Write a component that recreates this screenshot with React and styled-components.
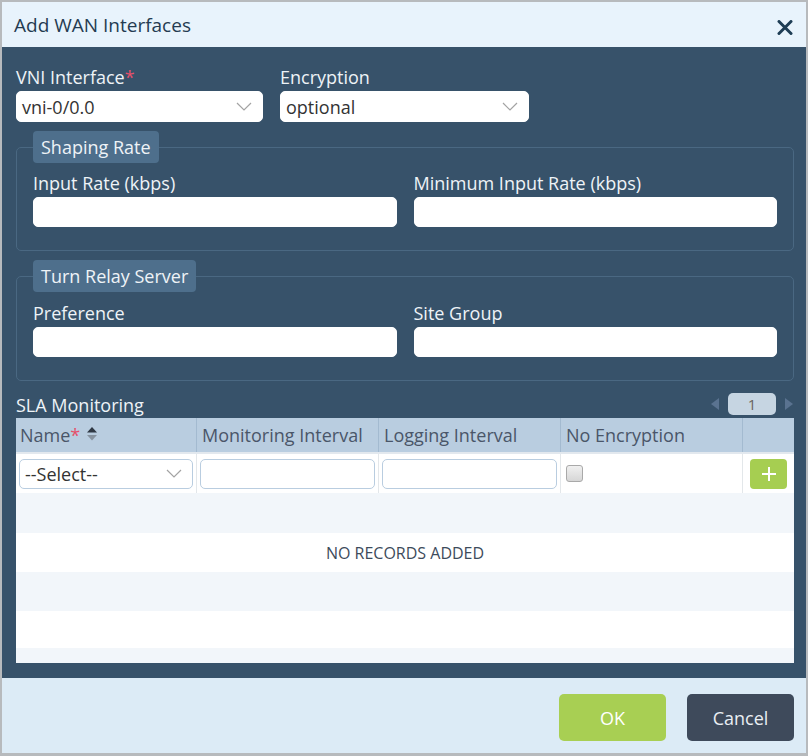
import React from 'react';
import styled, {createGlobalStyle} from 'styled-components';

const GlobalStyle = createGlobalStyle`
body {
    margin: 0;
    background: #fff;
    font-family: "Open Sans", "Liberation Sans", sans-serif;
}
* {
    box-sizing: border-box;
}
`;

const Dialog = styled.div`
width: 808px;
height: 756px;
border: 2px solid #b7babd;
border-bottom-width: 3px;
display: flex;
flex-direction: column;
background: #37526a;
`;

const Header = styled.div`
height: 45px;
flex: none;
background: #e8f3fc;
display: flex;
align-items: center;
justify-content: space-between;
padding: 0 12px 0 12px;
    h4 {
        margin: 0;
        font-size: 19px;
        font-weight: 400;
        color: #243b51;
        padding-top: 1px;
    }
`;

const CloseBtn = styled.button`
border: 0;
background: none;
padding: 0;
width: 18px;
height: 18px;
display: flex;
align-items: center;
justify-content: center;
margin-top: 5px;
cursor: pointer;
`;

const Body = styled.div`
flex: 1;
display: flex;
flex-direction: column;
padding: 18px 12px 15px 14px;
`;

const TopRow = styled.div`
display: grid;
grid-template-columns: 247px 249px;
column-gap: 17px;
`;

const Field = styled.div`
display: flex;
flex-direction: column;
`;

const Label = styled.label`
font-size: 18px;
line-height: 24px;
color: #eef3f7;
margin-bottom: 2px;
white-space: nowrap;
`;

const Req = styled.span`
color: #e5506a;
`;

const SelectBox = styled.div`
height: ${p => p.h || 31}px;
background: #fff;
border: 1px solid ${p => p.bordered ? '#b9cde0' : '#fff'};
border-radius: 5px;
display: flex;
align-items: center;
justify-content: space-between;
padding: 0 10px 0 5px;
font-size: 18px;
color: #333;
`;

const TextInput = styled.div`
height: 30px;
background: #fff;
border: 1px solid ${p => p.bordered ? '#b9cde0' : '#fff'};
border-radius: 5px;
`;

const Fieldset = styled.fieldset`
margin: 9px 0 0 0;
padding: 0 16px 23px 16px;
border: 1px solid #4a6882;
border-radius: 5px;
min-width: 0;
`;

const Legend = styled.legend`
height: 32px;
line-height: 32px;
padding: 0 8px;
background: #4e6f8c;
border-radius: 4px;
font-size: 18px;
color: #eef3f7;
`;

const TwoCols = styled.div`
display: grid;
grid-template-columns: 1fr 1fr;
column-gap: 17px;
margin-top: ${p => p.top}px;
`;

const SlaRow = styled.div`
margin-top: 12px;
display: flex;
justify-content: space-between;
align-items: center;
height: 24px;
`;

const SlaTitle = styled.span`
font-size: 18px;
line-height: 24px;
color: #eef3f7;
`;

const Pager = styled.div`
display: flex;
align-items: center;
gap: 8px;
margin-top: -3px;
`;

const PageBox = styled.div`
width: 48px;
height: 22px;
border-radius: 5px;
background: #c6d5e2;
color: #6b6560;
font-size: 15px;
line-height: 22px;
text-align: center;
`;

const Table = styled.div`
margin-top: 1px;
height: 245px;
overflow: hidden;
background: #fff;
display: flex;
flex-direction: column;
`;

const cols = '181px 182px 182px 182px 51px';

const HeadRow = styled.div`
display: grid;
grid-template-columns: ${cols};
height: 36px;
background: #b9cde0;
border-bottom: 2px solid #e2e8ee;
flex: none;
`;

const HeadCell = styled.div`
display: flex;
align-items: center;
padding-left: ${p => p.first ? 4 : 5}px;
font-size: 18px;
color: #4a5669;
white-space: nowrap;
border-right: ${p => p.last ? 'none' : '1px solid #a3bad0'};
`;

const SortIcon = styled.svg`
margin-left: 6px;
margin-top: -2px;
`;

const InputRow = styled.div`
display: grid;
grid-template-columns: ${cols};
height: 39px;
flex: none;
`;

const Cell = styled.div`
display: flex;
align-items: center;
justify-content: ${p => p.center ? 'center' : 'stretch'};
padding: 0 3px;
border-right: ${p => p.last ? 'none' : '1px solid #e3e7ea'};
    & > div {
        flex: ${p => p.center ? 'none' : '1'};
    }
`;

const Checkbox = styled.span`
width: 17px;
height: 17px;
margin-left: 2px;
border: 1px solid #a9a9a9;
border-radius: 3px;
background: linear-gradient(#f0f0f0, #d6d6d6);
`;

const AddBtn = styled.button`
width: 37px;
height: 30px;
border: 0;
border-radius: 4px;
background: #a6ce51;
display: flex;
align-items: center;
justify-content: center;
padding: 0;
`;

const StripeRow = styled.div`
height: ${p => p.h || 39}px;
flex: none;
background: ${p => p.odd ? '#f2f6fa' : '#fff'};
display: flex;
align-items: center;
justify-content: center;
font-size: 16px;
color: #3d4b5b;
`;

const Footer = styled.div`
height: 75px;
flex: none;
background: #dcebf6;
display: flex;
justify-content: flex-end;
align-items: flex-start;
gap: 21px;
padding: 16px 12px 0 0;
`;

const Button = styled.button`
width: 107px;
height: 47px;
border: 0;
border-radius: 5px;
font-family: inherit;
font-size: 18px;
background: ${p => p.primary ? '#a8cf53' : '#3e4a5b'};
color: ${p => p.primary ? '#fff' : '#e9eef3'};
`;

const Chevron = () => (
    <svg width="16" height="9" viewBox="0 0 16 9">
        <polyline points="1,1 8,8 15,1" fill="none" stroke="#a3a3a3" strokeWidth="1.2"/>
    </svg>
)

const Arrow = ({dir}) => (
    <svg width="10" height="14" viewBox="0 0 10 14">
        {dir === 'left'
            ? <polygon points="9,1 1,7 9,13" fill="#5a7390"/>
            : <polygon points="1,1 9,7 1,13" fill="#5a7390"/>}
    </svg>
)

const Select = ({value, h, bordered}) => (
    <SelectBox h={h} bordered={bordered}>
        <span>{value}</span>
        <Chevron/>
    </SelectBox>
)

export default function App() {
    const stripes = [
        {odd: true, h: 40},
        {odd: false, text: 'NO RECORDS ADDED'},
        {odd: true},
        {odd: false, h: 37},
        {odd: true, h: 20}
    ];

    return (
        <>
            <GlobalStyle/>
            <Dialog>
                <Header>
                    <h4>Add WAN Interfaces</h4>
                    <CloseBtn>
                        <svg width="16" height="15" viewBox="0 0 16 15">
                            <path d="M2 1.5 L14 13.5 M14 1.5 L2 13.5" stroke="#1e3d55" strokeWidth="3" strokeLinecap="round"/>
                        </svg>
                    </CloseBtn>
                </Header>
                <Body>
                    <TopRow>
                        <Field>
                            <Label>VNI Interface<Req>*</Req></Label>
                            <Select value="vni-0/0.0"/>
                        </Field>
                        <Field>
                            <Label>Encryption</Label>
                            <Select value="optional"/>
                        </Field>
                    </TopRow>

                    <Fieldset>
                        <Legend>Shaping Rate</Legend>
                        <TwoCols top={8}>
                            <Field>
                                <Label>Input Rate (kbps)</Label>
                                <TextInput/>
                            </Field>
                            <Field>
                                <Label>Minimum Input Rate (kbps)</Label>
                                <TextInput/>
                            </Field>
                        </TwoCols>
                    </Fieldset>

                    <Fieldset>
                        <Legend>Turn Relay Server</Legend>
                        <TwoCols top={9}>
                            <Field>
                                <Label>Preference</Label>
                                <TextInput/>
                            </Field>
                            <Field>
                                <Label>Site Group</Label>
                                <TextInput/>
                            </Field>
                        </TwoCols>
                    </Fieldset>

                    <SlaRow>
                        <SlaTitle>SLA Monitoring</SlaTitle>
                        <Pager>
                            <Arrow dir="left"/>
                            <PageBox>1</PageBox>
                            <Arrow dir="right"/>
                        </Pager>
                    </SlaRow>

                    <Table>
                        <HeadRow>
                            <HeadCell first>
                                Name<Req>*</Req>
                                <SortIcon width="12" height="16" viewBox="0 0 12 16">
                                    <polygon points="6,1 11,6.5 1,6.5" fill="#2f3844"/>
                                    <polygon points="1,9 11,9 6,14.5" fill="#8793a0"/>
                                </SortIcon>
                            </HeadCell>
                            <HeadCell>Monitoring Interval</HeadCell>
                            <HeadCell>Logging Interval</HeadCell>
                            <HeadCell>No Encryption</HeadCell>
                            <HeadCell last/>
                        </HeadRow>
                        <InputRow>
                            <Cell><Select value="--Select--" h={30} bordered/></Cell>
                            <Cell><TextInput bordered/></Cell>
                            <Cell><TextInput bordered/></Cell>
                            <Cell><Checkbox/></Cell>
                            <Cell last center>
                                <AddBtn>
                                    <svg width="16" height="16" viewBox="0 0 16 16">
                                        <path d="M8 1 V15 M1 8 H15" stroke="#fff" strokeWidth="2"/>
                                    </svg>
                                </AddBtn>
                            </Cell>
                        </InputRow>
                        {stripes.map((s, i) => (
                            <StripeRow key={i} odd={s.odd} h={s.h}>{s.text}</StripeRow>
                        ))}
                    </Table>
                </Body>
                <Footer>
                    <Button primary>OK</Button>
                    <Button>Cancel</Button>
                </Footer>
            </Dialog>
        </>
    );
}
